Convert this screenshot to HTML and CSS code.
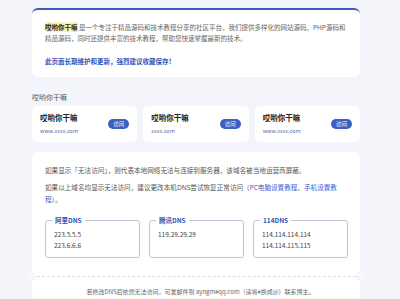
FILE: index.html
```html
<!DOCTYPE html>
<html lang="zh">
<head>
<meta charset="utf-8">
<link rel="stylesheet" href="styles.css">
</head>
<body>
<div class="page">
  <section class="card intro">
    <p class="intro-text"><span class="hl">哎哟你干嘛</span> 是一个专注于精品源码和技术教程分享的社区平台。我们提供多样化的网站源码、PHP源码和精品源码，同时还提供丰富的技术教程，帮助您快速掌握最新的技术。</p>
    <p class="notice">此页面长期维护和更新，强烈建议收藏保存！</p>
  </section>

  <h2 class="section-title">哎哟你干嘛</h2>
  <div class="sites">
    <div class="site">
      <div class="site-info"><div class="site-name">哎哟你干嘛</div><div class="site-url">www.xxxx.com</div></div>
      <a class="visit">访问</a>
    </div>
    <div class="site">
      <div class="site-info"><div class="site-name">哎哟你干嘛</div><div class="site-url">xxxx.com</div></div>
      <a class="visit">访问</a>
    </div>
    <div class="site">
      <div class="site-info"><div class="site-name">哎哟你干嘛</div><div class="site-url">www.xxxx.com</div></div>
      <a class="visit">访问</a>
    </div>
  </div>

  <section class="card help">
    <p class="help-p">如果显示「无法访问」，则代表本地网络无法与连接到服务器，该域名被当地运营商屏蔽。</p>
    <p class="help-p">如果以上域名均显示无法访问，建议更改本机<span class="latin">DNS</span>尝试恢复正常访问（<a class="link"><span class="latin">PC</span>电脑设置教程</a>、<a class="link">手机设置教程</a>）。</p>
    <div class="dns-row">
      <div class="dns"><span class="dns-label">阿里DNS</span><div>223.5.5.5</div><div>223.6.6.6</div></div>
      <div class="dns"><span class="dns-label">腾讯DNS</span><div>119.29.29.29</div></div>
      <div class="dns"><span class="dns-label">114DNS</span><div>114.114.114.114</div><div>114.114.115.115</div></div>
    </div>
    <div class="divider"></div>
    <p class="footer">若修改DNS后依然无法访问，可发邮件到 ayngm#qq.com（请将#换成@）联系博主。</p>
  </section>
</div>
</body>
</html>
```
FILE: styles.css
```css
* { box-sizing: border-box; }
html, body { margin: 0; padding: 0; }
body {
  background: #f4f5fa;
  font-family: "Noto Sans CJK SC", "Liberation Sans", sans-serif;
  color: #555;
  font-size: 6.5px;
  height: 299px;
  overflow: hidden;
}
p { margin: 0; }
.page {
  width: 328px;
  margin-left: 32px;
  padding-top: 8px;
}
.card {
  background: #fff;
  border-radius: 6px;
}
.intro {
  border-top: 2px solid #3a5cbf;
  padding: 11.5px 13px 10.5px 13px;
}
.intro-text { line-height: 11px; color: #666; }
.hl {
  background: #fff2b3;
  color: #222;
  font-weight: bold;
}
.notice {
  margin-top: 12px;
  line-height: 11px;
  color: #2f55b8;
  font-weight: bold;
}
.section-title {
  margin: 15px 0 4px 0;
  font-size: 7px;
  line-height: 10px;
  font-weight: normal;
  color: #555;
}
.sites {
  display: grid;
  grid-template-columns: repeat(3, 1fr);
  gap: 6px;
}
.site {
  background: #fff;
  border-radius: 5px;
  padding: 7px 8px 7px 8px;
  display: flex;
  align-items: center;
  justify-content: space-between;
}
.site-name {
  font-size: 7.5px;
  line-height: 10px;
  font-weight: bold;
  color: #222;
}
.site-url {
  margin-top: 4px;
  font-size: 5.5px;
  line-height: 8px;
  color: #5a6aa0;
}
.visit {
  width: 21px;
  height: 10px;
  border-radius: 5px;
  background: #3b60c2;
  color: #fff;
  font-size: 5.5px;
  line-height: 10px;
  text-align: center;
}
.help {
  margin-top: 10px;
  padding: 12.75px 12px 20px 13px;
  border-radius: 6px 6px 0 0;
}
.help-p { font-size: 6.6px; line-height: 10.5px; color: #555; padding-right: 8px; }
.help-p + .help-p { margin-top: 7px; }
.latin { font-family: "Noto Sans", "Noto Sans CJK SC", sans-serif; }
.link { color: #3a63cc; }
.dns-row {
  margin-top: 16px;
  display: grid;
  grid-template-columns: repeat(3, 1fr);
  gap: 9px;
}
.dns {
  position: relative;
  border: 1px solid #bcc6d6;
  border-radius: 3px;
  padding: 7.5px 8px 6.5px 8px;
  line-height: 11px;
  color: #444;
}
.dns-label {
  position: absolute;
  top: -6px;
  left: 6px;
  padding: 0 3px;
  background: #fff;
  color: #2f55b8;
  font-weight: bold;
  line-height: 10px;
}
.divider {
  position: relative;
  margin: 18px -8px 0 -8px;
  border-top: 1px dashed #dcdde3;
}
.divider::before, .divider::after {
  content: "";
  position: absolute;
  top: -5px;
  width: 9px;
  height: 9px;
  border-radius: 50%;
  background: #f6f6fb;
}
.divider::before { left: -10px; }
.divider::after { right: -9px; }
.footer {
  margin-top: 10px;
  text-align: center;
  font-size: 6px;
  line-height: 10px;
  color: #666;
  padding-left: 8px;
}
```
